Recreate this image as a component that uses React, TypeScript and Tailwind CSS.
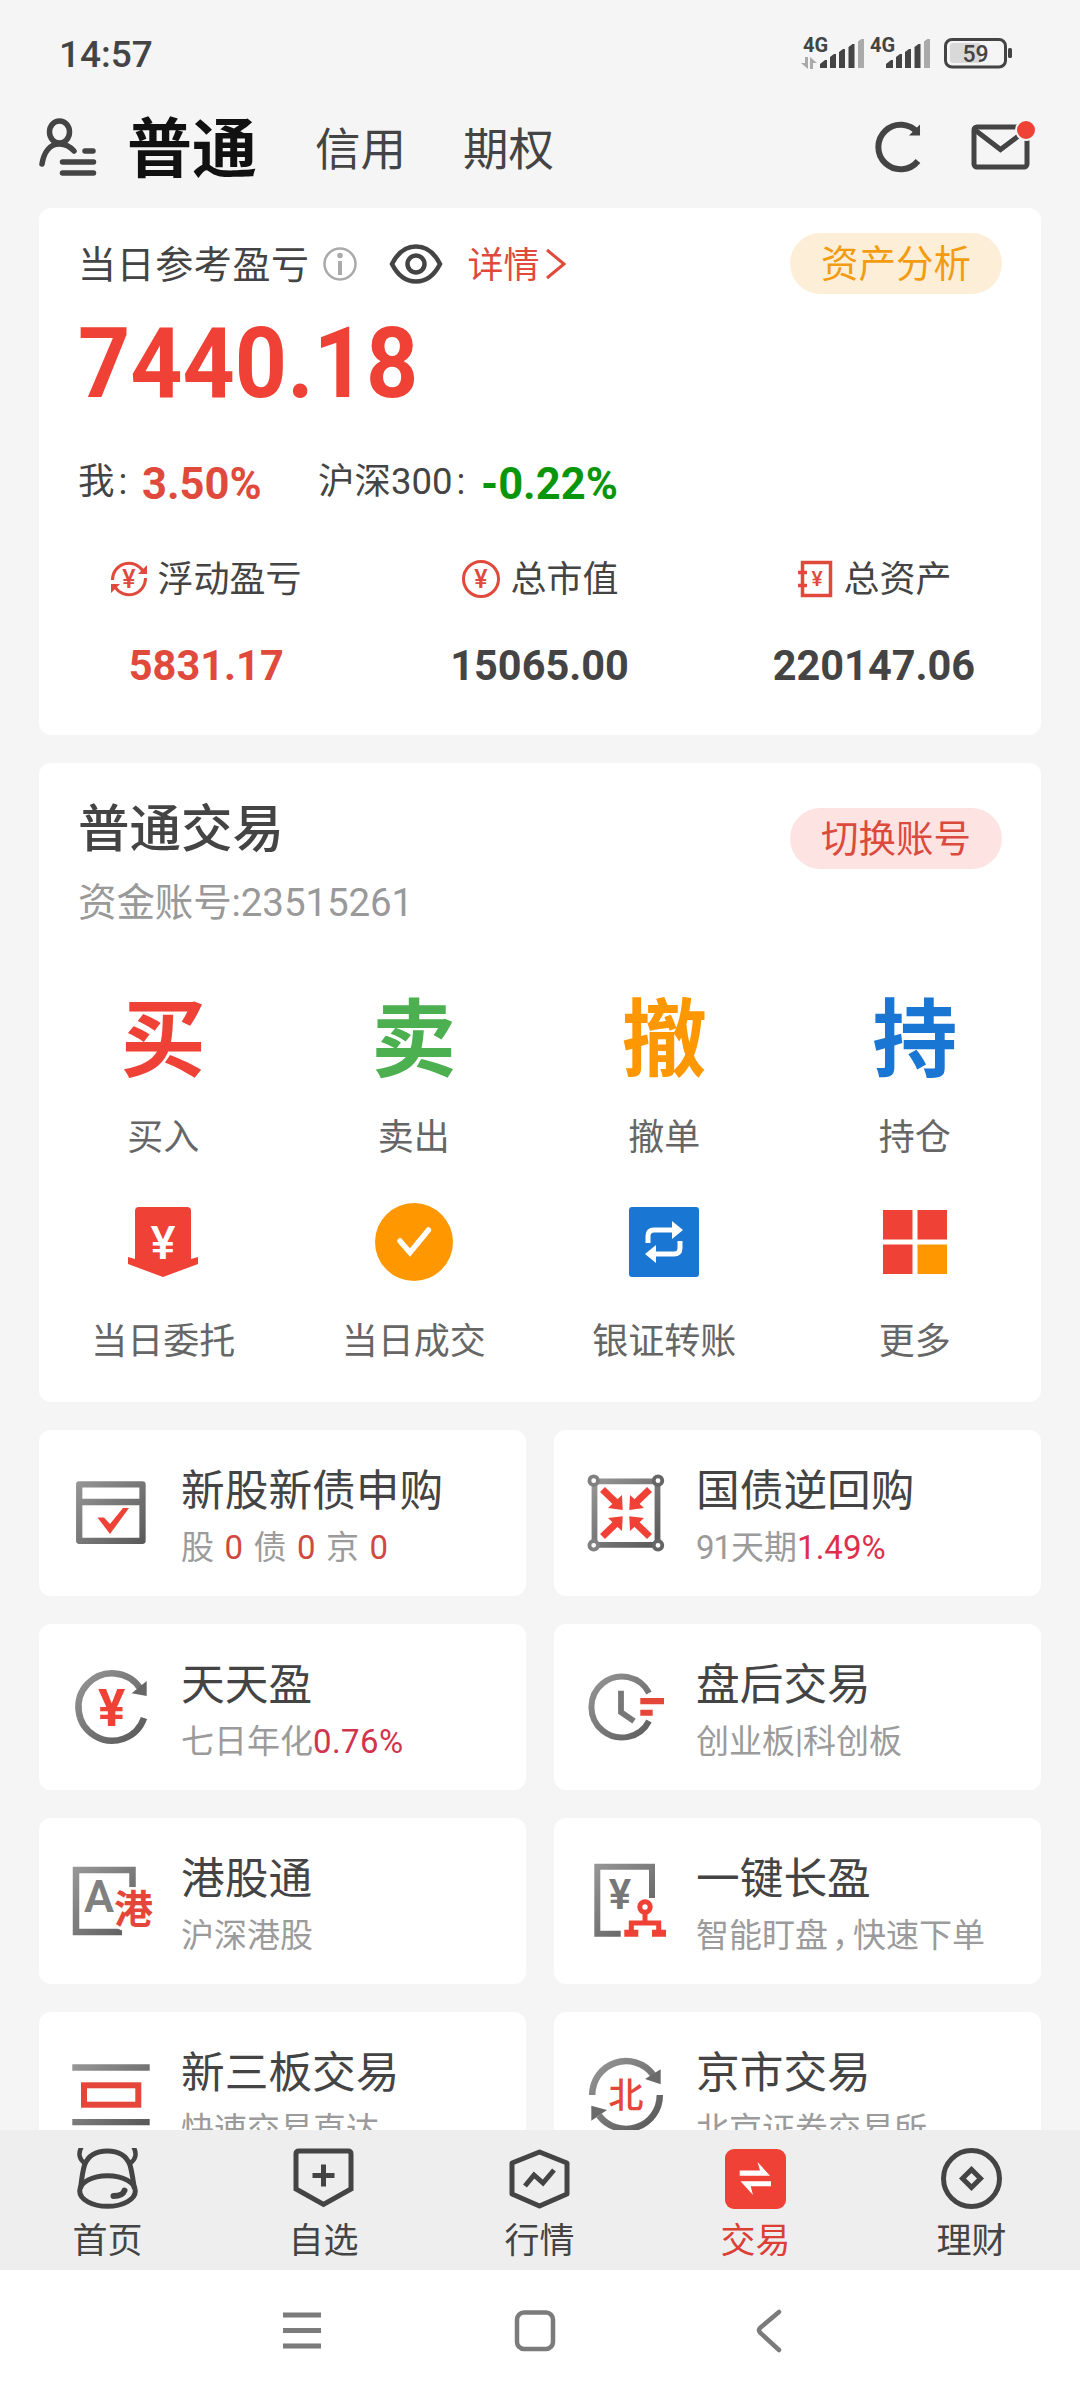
import React from 'react';

const RED = '#ef4135';
const DARK = '#444444';

const SignalBars = () => (
  <svg width="45" height="30" viewBox="0 0 45 30" fill={DARK}>
    <path d="M0 29v-4l5-4h2v8zM10 29V18l4-3h2v14zM19 29V13l4-3h2v19zM28.500 29V8l4-3h2v24z" />
    <path d="M38 29V2.500l4-3h2V29z" fill="#aaaaaa" />
  </svg>
);

const StatusBar = () => (
  <div className="flex h-[106px] shrink-0 items-center justify-between pr-[65px] pl-[59px]">
    <span className="pt-0.5 text-[37px] leading-none font-medium">14:57</span>
    <div className="flex h-8 items-end">
      <div className="flex h-8 w-[17px] flex-col">
        <span className="ml-0.5 text-[20px] leading-[16px] font-bold">4G</span>
        <svg className="mt-1" width="17" height="12" viewBox="0 0 17 12" fill="#aaaaaa">
          <path d="M4 0h3v12L0 6h4zM9 12V0l7 6h-4v6z" />
        </svg>
      </div>
      <div className="ml-0.5"><SignalBars /></div>
      <span className="ml-[5px] w-4 self-start text-[20px] leading-[16px] font-bold">4G</span>
      <SignalBars />
      <svg className="ml-3" width="72" height="32" viewBox="0 0 72 32">
        <rect x="7" y="6" width="31" height="20" rx="3" fill="#d9d9d9" />
        <rect x="2.500" y="2.500" width="60" height="27.500" rx="6.500" fill="none" stroke={DARK} strokeWidth="3" />
        <rect x="65" y="11" width="4" height="10" rx="1.500" fill={DARK} />
        <text x="32.500" y="24.500" textAnchor="middle" fontSize="23" fontWeight="500" fill={DARK}>59</text>
      </svg>
    </div>
  </div>
);

const Header = () => (
  <div className="flex h-[102px] shrink-0 items-start pt-2 pr-[45px] pl-[38px]">
    <svg className="mt-0.5" width="60" height="64" viewBox="0 0 60 64" fill="none" stroke={DARK} strokeWidth="5.500" strokeLinecap="round">
      <ellipse cx="21.500" cy="16" rx="10" ry="11" />
      <path d="M4 48c2-12 8-20 17.500-20 6 0 11 3 14.500 7" />
      <path d="M47 35h8M24.500 46h31M24.500 57h31" />
    </svg>
    <div className="ml-[29px] flex h-[72px] items-center pt-px">
      <span className="w-[188px] text-[65px] leading-none font-bold text-[#111111]">普通</span>
      <span className="w-[148px] text-[45.5px] leading-none">信用</span>
      <span className="text-[45.5px] leading-none">期权</span>
    </div>
    <svg className="mt-1 ml-auto" width="50" height="56" viewBox="0 0 50 56">
      <path d="M43 15A22.300 22.300 0 1 0 43 43" fill="none" stroke={DARK} strokeWidth="6" />
      <path d="M45 6.500V17.500H34z" fill={DARK} />
    </svg>
    <svg className="mt-[5px] ml-[44px]" width="66" height="56" viewBox="0 0 66 56">
      <rect x="5" y="8" width="53" height="40" rx="3" fill="none" stroke={DARK} strokeWidth="5" />
      <path d="M6 11l25.500 19.500L52 15" fill="none" stroke={DARK} strokeWidth="5" />
      <circle cx="57" cy="11" r="10" fill={RED} stroke="#f5f5f5" strokeWidth="2" />
    </svg>
  </div>
);

const FloatIcon = () => (
  <svg width="38" height="40" viewBox="0 0 38 40" fill="none" stroke="#e04a3c" strokeWidth="3">
    <path d="M2.500 21A16.500 16.500 0 0 1 33 12M35.500 19A16.500 16.500 0 0 1 5 28" />
    <path d="M37 6v9h-9zM1 34v-9h9z" fill="#e04a3c" stroke="none" />
    <text x="19" y="28.500" textAnchor="middle" fontSize="25" fontWeight="500" fill="#e04a3c" stroke="none">¥</text>
  </svg>
);

const ValueIcon = () => (
  <svg width="40" height="40" viewBox="0 0 40 40">
    <circle cx="20" cy="20" r="17.500" fill="none" stroke="#e04a3c" strokeWidth="3" />
    <text x="20" y="28.500" textAnchor="middle" fontSize="25" fontWeight="500" fill="#e04a3c">¥</text>
  </svg>
);

const AssetIcon = () => (
  <svg width="38" height="40" viewBox="0 0 38 40">
    <path d="M6.500 3.500h28v33h-28zM2 13.500h9M2 26.500h9" fill="none" stroke="#e04a3c" strokeWidth="3.500" />
    <text x="21" y="27" textAnchor="middle" fontSize="21" fontWeight="500" fill="#e04a3c">¥</text>
  </svg>
);

const stats = [
  { label: '浮动盈亏', value: '5831.17', icon: <FloatIcon />, color: 'text-[#e04a3c]' },
  { label: '总市值', value: '15065.00', icon: <ValueIcon />, color: 'text-[#444444]' },
  { label: '总资产', value: '220147.06', icon: <AssetIcon />, color: 'text-[#444444]' },
];

const AssetCard = () => (
  <section className="h-[527px] shrink-0 rounded-[12px] bg-white">
    <div className="flex h-[112px] items-center pr-[39px] pl-[39px]">
      <span className="pt-0.5 text-[38px] leading-none tracking-[0.6px]">当日参考盈亏</span>
      <svg className="ml-[12px]" width="36" height="36" viewBox="0 0 36 36">
        <circle cx="18" cy="18" r="15.500" fill="none" stroke="#aaaaaa" strokeWidth="2.500" />
        <circle cx="18" cy="9.500" r="2.800" fill="#aaaaaa" />
        <path d="M18 15v14" stroke="#aaaaaa" strokeWidth="4" />
      </svg>
      <svg className="ml-[31px]" width="54" height="42" viewBox="0 0 54 42" fill="none" stroke={DARK} strokeWidth="4.500">
        <path d="M3 21C9 9 17 3.500 27 3.500S45 9 51 21C45 33 37 38.500 27 38.500S9 33 3 21z" />
        <circle cx="27" cy="21" r="8.500" />
      </svg>
      <span className="ml-[25px] pt-[3px] text-[36px] leading-none text-[#e04a3c]">详情</span>
      <svg className="ml-1" width="24" height="34" viewBox="0 0 24 34">
        <path d="M3 3l17 14L3 31" fill="none" stroke="#e04a3c" strokeWidth="3" />
      </svg>
      <span className="-mt-0.5 ml-auto flex h-[61px] w-[212px] items-center justify-center rounded-full bg-[#fdefd7] pt-[3px] text-[37.5px] leading-none text-[#f39c12]">资产分析</span>
    </div>
    <div className="flex h-[84px] items-center pt-[3px] pl-[39px]">
      <span className="origin-left scale-x-[0.93] text-[98px] leading-none font-bold text-[#ef4135]">7440.18</span>
    </div>
    <div className="mt-[48px] flex h-[60px] items-center pl-[39px]">
      <span className="w-[64px] text-[36.5px] leading-none">我<span className="ml-1">:</span></span>
      <span className="w-[176px] pt-[5px] text-[43.5px] leading-none font-bold text-[#e04a3c]">3.50%</span>
      <span className="w-[163px] text-[36.5px] leading-none">沪深300<span className="ml-1">:</span></span>
      <span className="pt-[5px] text-[43.5px] leading-none font-bold text-[#0a960a]">-0.22%</span>
    </div>
    <div className="mt-[35px] grid grid-cols-3">
      {stats.map((s) => (
        <div key={s.label} className="flex flex-col items-center">
          <div className="flex h-[64px] items-center gap-[9px] text-[36px] leading-none">
            {s.icon}
            <span className="pt-0.5">{s.label}</span>
          </div>
          <span className={`mt-[12px] scale-x-[0.965] text-[43px] leading-[84px] font-bold ${s.color}`}>{s.value}</span>
        </div>
      ))}
    </div>
  </section>
);

const OrderIcon = () => (
  <svg width="70" height="70" viewBox="0 0 70 70">
    <path d="M11 0h48a4 4 0 0 1 4 4v48l7-2v7L35 70 0 57v-7l7 2V4a4 4 0 0 1 4-4z" fill={RED} />
    <text x="35" y="52" textAnchor="middle" fontSize="47" fontWeight="500" fill="white">¥</text>
  </svg>
);

const DealIcon = () => (
  <svg width="78" height="78" viewBox="0 0 78 78">
    <circle cx="39" cy="39" r="39" fill="#ff9800" />
    <path d="M25 38l10 11.500L53.500 27" fill="none" stroke="white" strokeWidth="5.500" strokeLinecap="round" />
  </svg>
);

const TransferIcon = () => (
  <svg width="70" height="70" viewBox="0 0 70 70">
    <rect width="70" height="70" rx="3" fill="#1976d2" />
    <path d="M19 36v-7q0-6 6-6h20M51 34v7q0 6-6 6H25" fill="none" stroke="white" strokeWidth="5" />
    <path d="M43 14l11 9-11 9zM27 56l-11-9 11-9z" fill="white" />
  </svg>
);

const MoreIcon = () => (
  <svg width="64" height="64" viewBox="0 0 64 64">
    <path d="M0 0h29.500v29.500H0zM34.500 0H64v29.500H34.500zM0 34.500h29.500V64H0z" fill={RED} />
    <path d="M34.500 34.500H64V64H34.500z" fill="#ff9800" />
  </svg>
);

const bigGlyph = 'pt-[7px] text-[85px] leading-none font-bold';

const actions = [
  { label: '买入', icon: <span className={`${bigGlyph} text-[#ef4135]`}>买</span> },
  { label: '卖出', icon: <span className={`${bigGlyph} text-[#4caf50]`}>卖</span> },
  { label: '撤单', icon: <span className={`${bigGlyph} text-[#ff9800]`}>撤</span> },
  { label: '持仓', icon: <span className={`${bigGlyph} text-[#1976d2]`}>持</span> },
  { label: '当日委托', icon: <OrderIcon /> },
  { label: '当日成交', icon: <DealIcon /> },
  { label: '银证转账', icon: <TransferIcon /> },
  { label: '更多', icon: <MoreIcon /> },
];

const TradeCard = () => (
  <section className="h-[639px] shrink-0 rounded-[12px] bg-white">
    <div className="flex h-[172px] items-start justify-between pr-[39px] pl-[39px]">
      <div className="flex flex-col pt-[37px]">
        <h2 className="text-[51.5px] leading-[60px] font-medium">普通交易</h2>
        <p className="mt-[19px] text-[38.5px] leading-[48px] tracking-[-0.1px] text-[#999999]">资金账号:23515261</p>
      </div>
      <span className="mt-[45px] flex h-[61px] w-[212px] items-center justify-center rounded-full bg-[#fde3e2] pt-[3px] text-[37.5px] leading-none text-[#dc4a3e]">切换账号</span>
    </div>
    <div className="mt-[53px] grid grid-cols-4">
      {actions.map((a) => (
        <div key={a.label} className="flex h-[204px] flex-col items-center pr-0.5">
          <div className="flex h-[100px] items-center">{a.icon}</div>
          <span className="mt-[31px] text-[36px] leading-[38px] text-[#666666]">{a.label}</span>
        </div>
      ))}
    </div>
  </section>
);

const GREY = 'url(#greyFade)';

const IpoIcon = () => (
  <>
    <path d="M40.200 54.300h63.300v56.500H40.200zM40 72h63" fill="none" stroke={GREY} strokeWidth="6.300" strokeLinejoin="round" />
    <path d="M58.500 87.500H65l6 6.500L84 78h6l-19 26z" fill={RED} />
  </>
);

const RepoIcon = () => (
  <>
    <path d="M40.500 51.300h63v63.500h-63z" fill="none" stroke={GREY} strokeWidth="5.800" />
    {[[39.7, 50.7], [104, 50.7], [39.7, 115.3], [104, 115.3]].map(([x, y]) => (
      <circle key={`${x}-${y}`} cx={x} cy={y} r="4.300" fill="white" stroke={x > 100 ? '#666666' : '#808080'} strokeWidth="3.800" />
    ))}
    {['', 'scale(-1 1)', 'scale(1 -1)', 'scale(-1 -1)'].map((t) => (
      <g key={t} transform={`translate(72 83.1) ${t}`}>
        <path d="M-23.500-23.500L-9-9.500" stroke={RED} strokeWidth="7" />
        <path d="M-3.300-3.100L-18-5-4-18z" fill={RED} />
      </g>
    ))}
  </>
);

const DailyIcon = () => (
  <>
    <path d="M101 64A33.700 33.700 0 1 0 105 94" fill="none" stroke={GREY} strokeWidth="6.500" />
    <path d="M107.700 57v15l-15-2.700z" fill="#666666" />
    <text x="72.700" y="102" textAnchor="middle" fontSize="51" fontWeight="700" fill={RED}>¥</text>
  </>
);

const AfterHoursIcon = () => (
  <>
    <path d="M95 69A30.500 30.500 0 1 0 95 97" fill="none" stroke={GREY} strokeWidth="6" />
    <path d="M67 66.700v21.500l13 9" fill="none" stroke="#777777" strokeWidth="5.800" />
    <path d="M86.300 74H110v6.300H86.300zM86.300 85.700h12.400v6H86.300z" fill="#e5463a" />
  </>
);

const HkIcon = () => (
  <>
    <path d="M93.500 69.300V52H37v62h46" fill="none" stroke={GREY} strokeWidth="6.500" />
    <text x="60" y="93.500" textAnchor="middle" fontSize="45" fontWeight="600" fill="#808080">A</text>
    <text x="94.500" y="105" textAnchor="middle" fontSize="39" fontWeight="700" fill="#e5463a" stroke="white" strokeWidth="5" paintOrder="stroke">港</text>
  </>
);

const OneKeyIcon = () => (
  <>
    <path d="M98 80V48.700H43.300v67h23.400" fill="none" stroke={GREY} strokeWidth="6" />
    <text x="66" y="91" textAnchor="middle" fontSize="42" fontWeight="600" fill="#777777">¥</text>
    <circle cx="91" cy="89" r="5.200" fill="none" stroke={RED} strokeWidth="5" />
    <path d="M91 96v9M77.300 113v-8h27.400v8" fill="none" stroke={RED} strokeWidth="5" />
    <path d="M70.300 111.700h14v7h-14zM98 111.700h14v7H98z" fill={RED} />
  </>
);

const NeeqIcon = () => (
  <>
    <path d="M33.300 52.300h77.400v6.400H33.300zM33.300 107h77.400v6.300H33.300z" fill={GREY} />
    <rect x="45" y="73.300" width="54.300" height="19.400" fill="none" stroke="#e5463a" strokeWidth="6" />
  </>
);

const BseIcon = () => (
  <>
    <path d="M38.200 83A33.800 33.800 0 0 1 99 62.500M105.800 83A33.800 33.800 0 0 1 45 103.500" fill="none" stroke={GREY} strokeWidth="6.500" />
    <path d="M106.700 57.300v15L91 67z" fill="#6a6a6a" />
    <path d="M37.300 108.700v-15L53 98z" fill="#6a6a6a" />
    <text x="72" y="96" textAnchor="middle" fontSize="35" fontWeight="500" fill="#e5463a">北</text>
  </>
);

const Zero = () => <span className="mx-[10.5px] text-[#d0493f]">0</span>;

const entries = [
  { title: '新股新债申购', icon: <IpoIcon />, sub: <>股<Zero />债<Zero />京<Zero /></> },
  { title: '国债逆回购', icon: <RepoIcon />, sub: <><span className="tracking-[-1px]">91</span>天期<span className="text-[#dd2f4b]">1.49%</span></> },
  { title: '天天盈', icon: <DailyIcon />, sub: <>七日年化<span className="tracking-[0.4px] text-[#d2334d]">0.76%</span></> },
  { title: '盘后交易', icon: <AfterHoursIcon />, sub: '创业板|科创板' },
  { title: '港股通', icon: <HkIcon />, sub: '沪深港股' },
  { title: '一键长盈', icon: <OneKeyIcon />, sub: <>智能盯盘<span className="-mr-3 ml-1">，</span>快速下单</> },
  { title: '新三板交易', icon: <NeeqIcon />, sub: '快速交易直达' },
  { title: '京市交易', icon: <BseIcon />, sub: '北京证券交易所' },
];

const EntryGrid = () => (
  <div className="grid shrink-0 grid-cols-2 gap-7">
    {entries.map((e) => (
      <div key={e.title} className="flex h-[166px] items-center rounded-[12px] bg-white pl-[30px]">
        <svg className="shrink-0" width="90" height="90" viewBox="30 38 90 90">
          <defs>
            <linearGradient id="greyFade" gradientUnits="userSpaceOnUse" x1="35" y1="45" x2="108" y2="120">
              <stop offset="0" stopColor="#9a9a9a" />
              <stop offset="1" stopColor="#555555" />
            </linearGradient>
          </defs>
          {e.icon}
        </svg>
        <div className="ml-[22px] flex flex-col pt-1">
          <span className="text-[43.7px] leading-[60px]">{e.title}</span>
          <span className="mt-[5px] text-[33px] leading-[44px] whitespace-nowrap text-[#9b9b9b]">{e.sub}</span>
        </div>
      </div>
    ))}
  </div>
);

const tabs = [
  {
    label: '首页',
    icon: (
      <>
        <path d="M3.500 41C4.500 33 5 26 7.500 17 11 8 19 3 30.300 3S49.500 8 53 17c2.500 9 3 16 4.500 24" />
        <ellipse cx="30.500" cy="43" rx="27.800" ry="15.300" />
        <path d="M4.500-1C1 5 2 12 8 15M56.500-1C60 5 59 12 53 15" strokeWidth="4.500" />
        <path d="M47.500 42.500c-1.500 4-4 5.500-11 5.500" strokeWidth="6" strokeLinecap="round" />
      </>
    ),
  },
  {
    label: '自选',
    icon: (
      <>
        <path d="M6 3h49q3 0 3 3v35L30.500 56.500 3 41V6q0-3 3-3z" />
        <path d="M30.500 16.500v22M19.500 27.500h22" />
      </>
    ),
  },
  {
    label: '行情',
    icon: (
      <>
        <path d="M30.500 4L58 15v31L30.500 58 3 46V15z" strokeLinejoin="round" />
        <path d="M16 38l9-11 9 8 11-13" />
      </>
    ),
  },
  {
    label: '交易',
    active: true,
    icon: (
      <>
        <rect x="0" y="1" width="61" height="60" rx="9" fill={RED} stroke="none" />
        <path d="M14.700 22.500H35L32.500 14 45 27.700H14.700zM46 33.300H15.500L28 47l-2.300-8.700H46z" fill="white" stroke="none" />
      </>
    ),
  },
  {
    label: '理财',
    icon: (
      <>
        <circle cx="30.500" cy="30.500" r="28" />
        <path d="M30.500 21.500l9 9-9 9-9-9z" />
      </>
    ),
  },
];

const TabBar = () => (
  <nav className="grid h-[140px] shrink-0 grid-cols-5 bg-[#eeeeee]">
    {tabs.map((t) => (
      <div key={t.label} className="flex flex-col items-center pt-[18px] pr-px">
        <svg width="61" height="62" viewBox="0 0 61 62" fill="none" stroke={DARK} strokeWidth="5">{t.icon}</svg>
        <span className={`mt-[14px] text-[35px] leading-[36px] ${t.active ? 'text-[#dc4035]' : ''}`}>{t.label}</span>
      </div>
    ))}
  </nav>
);

const SystemNav = () => (
  <div className="flex h-[130px] shrink-0 items-center bg-white pb-2 pl-[282px]">
    <svg width="40" height="44" viewBox="0 0 40 44" stroke="#7b7b7b" strokeWidth="5">
      <path d="M1 6h38M1 21.500h38M1 37h38" />
    </svg>
    <svg className="ml-[192px]" width="42" height="44" viewBox="0 0 42 44">
      <rect x="3" y="3.500" width="36" height="36.500" rx="7" fill="none" stroke="#7b7b7b" strokeWidth="4.500" />
    </svg>
    <svg className="ml-[198px]" width="30" height="44" viewBox="0 0 30 44">
      <path d="M25 3L6 19q-2 2 0 4.500L25 41" fill="none" stroke="#7b7b7b" strokeWidth="4.500" strokeLinecap="round" />
    </svg>
  </div>
);

export default function App() {
  return (
    <div className="flex h-[2400px] w-[1080px] flex-col overflow-hidden bg-[#f5f5f5] font-['Roboto','Noto_Sans_CJK_SC',sans-serif] text-[#444444]">
      <StatusBar />
      <Header />
      <main className="flex min-h-0 flex-1 flex-col gap-7 overflow-hidden px-[39px]">
        <AssetCard />
        <TradeCard />
        <EntryGrid />
      </main>
      <TabBar />
      <SystemNav />
    </div>
  );
}
